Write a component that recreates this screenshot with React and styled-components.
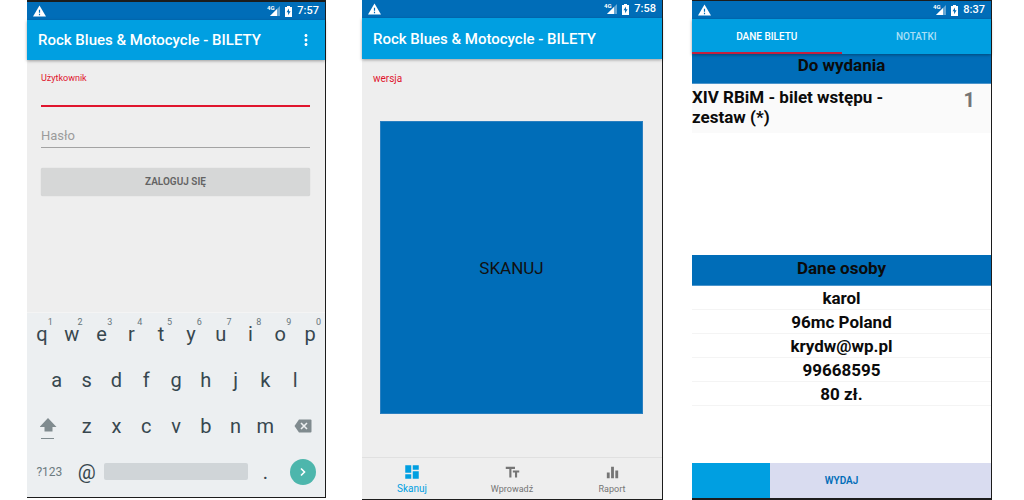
import React from "react";
import styled, { createGlobalStyle } from "styled-components";
import { MdDashboard, MdEqualizer, MdMoreVert, MdTextFields } from "react-icons/md";

const color = {
  dark: "#006db8",
  primary: "#009fe1",
  accent: "#e0142d",
  surface: "#eeeeee",
  frame: "#1c1c1c",
  key: "#37474f",
  muted: "#757575",
};

const GlobalStyle = createGlobalStyle`
  * { box-sizing: border-box; }
  body { margin: 0; background: #fff; font-family: Roboto, "Liberation Sans", sans-serif; }
  button, input { font-family: inherit; }
`;

const Page = styled.main`
  display: grid;
  grid-template-columns: 299fr 36px 301fr 29px 300fr;
  min-height: 100vh;
  padding: 0 32px 0 27px;
`;

const Phone = styled.section`
  grid-column: ${(p) => p.$column};
  display: flex;
  flex-direction: column;
  min-width: 0;
  margin-bottom: ${(p) => p.$below || 0}px;
  background: ${(p) => p.$background || color.surface};
  border: 0 solid ${color.frame};
  border-width: ${(p) => p.$edges};
`;

const StatusBar = styled.div`
  display: flex;
  align-items: center;
  height: 18px;
  padding: 0 6px;
  background: ${color.dark};
  color: #fff;
`;

const StatusIcons = styled.div`
  display: flex;
  align-items: center;
  margin-left: auto;
  gap: 5px;
`;

const Clock = styled.time`
  font-size: 11px;
  line-height: 18px;
  font-weight: 500;
`;

const AppBar = styled.header`
  position: relative;
  display: flex;
  align-items: center;
  justify-content: space-between;
  height: ${(p) => p.$height || 40}px;
  padding: 0 10px 0 11px;
  background: ${color.primary};
  color: #fff;
  box-shadow: 0 1px 3px rgba(0, 0, 0, 0.35);
`;

const Title = styled.h1`
  margin: 0;
  font-size: 15px;
  line-height: 20px;
  font-weight: 500;
  white-space: nowrap;
`;

const IconButton = styled.button`
  display: flex;
  padding: 0;
  border: 0;
  background: none;
  color: inherit;
`;

const LoginForm = styled.form`
  flex: 1;
  display: flex;
  flex-direction: column;
  padding: 12px 15px 0 14px;
`;

const FieldLabel = styled.label`
  font-size: 9px;
  line-height: 12px;
  color: ${color.accent};
`;

const TextInput = styled.input`
  width: 100%;
  height: ${(p) => (p.$active ? 23 : 25)}px;
  margin-bottom: ${(p) => (p.$active ? 16 : 20)}px;
  padding: 0;
  border: 0;
  border-bottom: ${(p) => (p.$active ? `2px solid ${color.accent}` : "1px solid #a3a3a3")};
  border-radius: 0;
  outline: 0;
  background: none;
  font-size: 13px;
  line-height: 20px;
  &::placeholder { color: #9b9b9b; }
`;

const LoginButton = styled.button`
  height: 28px;
  border: 0;
  border-radius: 2px;
  background: #d6d7d7;
  box-shadow: 0 0 1px rgba(0, 0, 0, 0.2);
  color: #636363;
  font-size: 10px;
  line-height: 16px;
  font-weight: 600;
`;

const Keyboard = styled.div`
  border-top: 1px solid #f4f4f4;
  background: #eceff1;
`;

const KeyRow = styled.div`
  display: flex;
  justify-content: center;
  height: 46px;
  padding-bottom: 5px;
`;

const Key = styled.button`
  position: relative;
  display: flex;
  flex: 0 0 ${(p) => (p.$wide ? 15 : 10)}%;
  align-items: center;
  justify-content: center;
  min-width: 0;
  padding: 0;
  border: 0;
  background: none;
  color: ${(p) => (p.$soft ? "#6d7b81" : color.key)};
  font-size: ${(p) => (p.$soft ? 12 : 20)}px;
  line-height: 24px;
`;

const KeyHint = styled.span`
  position: absolute;
  top: 4px;
  right: 4px;
  color: #66757c;
  font-size: 9px;
  line-height: 10px;
`;

const SpaceKey = styled.button`
  flex: 0 0 48%;
  align-self: center;
  height: 17px;
  margin: 0 1%;
  padding: 0;
  border: 0;
  border-radius: 2px;
  background: #d0d5d8;
`;

const EnterDisc = styled.span`
  display: flex;
  align-items: center;
  justify-content: center;
  width: 26px;
  height: 26px;
  border-radius: 50%;
  background: #4db6ac;
`;

const ScanBody = styled.div`
  flex: 1;
  display: flex;
  flex-direction: column;
  padding: 12px 19px 43px 18px;
`;

const Version = styled.p`
  margin: 0 -7px 34px;
  color: ${color.accent};
  font-size: 10px;
  line-height: 16px;
`;

const ScanButton = styled.button`
  flex: 1;
  min-height: 200px;
  border: 1px solid #2a7fc0;
  background: ${color.dark};
  color: #111;
  font-size: 17px;
  line-height: 24px;
`;

const BottomNav = styled.nav`
  display: flex;
  height: 42px;
  border-top: 1px solid #e0e0e0;
`;

const NavLink = styled.a`
  flex: 1;
  display: flex;
  flex-direction: column;
  align-items: center;
  padding-top: ${(p) => (p.$active ? 5 : 6)}px;
  color: ${(p) => (p.$active ? color.primary : color.muted)};
  font-size: ${(p) => (p.$active ? 10 : 9)}px;
  line-height: 16px;
  text-decoration: none;
`;

const Tabs = styled.div`
  position: relative;
  display: flex;
  height: 35px;
  background: ${color.primary};
  box-shadow: 0 1px 3px rgba(0, 0, 0, 0.35);
`;

const Tab = styled.button`
  flex: 1;
  padding: 2px 0 0;
  border: 0;
  border-bottom: 2px solid ${(p) => (p.$active ? "#c3203f" : "transparent")};
  background: none;
  color: ${(p) => (p.$active ? "#fff" : "#a9dff6")};
  font-size: 10px;
  line-height: 16px;
  font-weight: 500;
`;

const SectionTitle = styled.h2`
  height: ${(p) => p.$height}px;
  margin: 0;
  border-bottom: 1px solid #4a94cb;
  background: ${color.dark};
  color: #0b0b0b;
  font-size: 17px;
  line-height: ${(p) => p.$line}px;
  font-weight: 700;
  text-align: center;
`;

const TicketArea = styled.div`
  flex: 1;
`;

const TicketRow = styled.div`
  display: flex;
  justify-content: space-between;
  min-height: 49px;
  padding: 3px 16px 0 0;
  background: #fafafa;
`;

const TicketName = styled.p`
  width: 70%;
  margin: 0;
  color: #0b0b0b;
  font-size: 17px;
  line-height: 20px;
  font-weight: 700;
`;

const TicketCount = styled.span`
  color: ${color.muted};
  font-size: 20px;
  line-height: 26px;
  font-weight: 700;
`;

const PersonList = styled.ul`
  margin: 0 0 57px;
  padding: 0;
  list-style: none;
`;

const PersonItem = styled.li`
  height: 24px;
  border-bottom: 1px solid #f4f4f4;
  color: #0b0b0b;
  font-size: 17px;
  line-height: 24px;
  font-weight: 700;
  text-align: center;
`;

const IssueButton = styled.button`
  height: 35px;
  padding: 0;
  border: 0;
  background: linear-gradient(to right, ${color.primary} 26%, #d9dcf0 26%);
  color: ${color.dark};
  font-size: 10px;
  line-height: 16px;
  font-weight: 600;
`;

function WarningIcon() {
  return (
    <svg width="13" height="12" viewBox="0 0 22 20" aria-hidden="true">
      <path d="M0 19.5h22L11 .5z" fill="#fff" />
      <path d="M10 8h2v5h-2zM10 14.8h2v2.2h-2z" fill={color.dark} />
    </svg>
  );
}

function SignalIcon() {
  return (
    <svg width="13" height="12" viewBox="0 0 13 12" aria-hidden="true">
      <path d="M13 1v10H3z" fill="#fff" opacity=".4" />
      <path d="M10 4v7H3z" fill="#fff" />
      <text x="0" y="5" fill="#fff" fontSize="6" fontWeight="700">4G</text>
    </svg>
  );
}

function BatteryIcon() {
  return (
    <svg width="7" height="11" viewBox="0 0 7 11" aria-hidden="true">
      <path d="M2 0h3v1h2v10H0V1h2z" fill="#fff" />
      <path d="M4 2.4 1.5 6.2h1.6V9.2L5.6 5.2H4z" fill={color.dark} />
    </svg>
  );
}

function ShiftIcon() {
  return (
    <svg width="18" height="26" viewBox="0 0 18 26" fill="#808b8f" aria-hidden="true">
      <path d="M8 5 16.5 14H12.5v4.5h-8V14H-.5z" />
      <path d="M1 25h13v1H1z" />
    </svg>
  );
}

function BackspaceIcon() {
  return (
    <svg width="18" height="14" viewBox="0 0 18 14" aria-hidden="true">
      <path d="M5 .5h11.5q1 0 1 1v11q0 1-1 1H5L.5 7z" fill="#808b8f" />
      <path d="m7 4 6 6m0-6-6 6" stroke="#eceff1" strokeWidth="1.6" />
    </svg>
  );
}

function EnterIcon() {
  return (
    <svg width="8" height="10" viewBox="0 0 8 10" aria-hidden="true">
      <path d="m2 1.5 3.5 3.5L2 8.5" fill="none" stroke="#fff" strokeWidth="1.6" />
    </svg>
  );
}

function Status({ time }) {
  return (
    <StatusBar>
      <WarningIcon />
      <StatusIcons>
        <SignalIcon />
        <BatteryIcon />
        <Clock>{time}</Clock>
      </StatusIcons>
    </StatusBar>
  );
}

const stop = (event) => event.preventDefault();

function LoginScreen() {
  return (
    <Phone $column={1} $edges="2px 1px 1px 0" $below={2}>
      <Status time="7:57" />
      <AppBar>
        <Title>Rock Blues &amp; Motocycle - BILETY</Title>
        <IconButton aria-label="Menu"><MdMoreVert size={18} /></IconButton>
      </AppBar>
      <LoginForm onSubmit={stop}>
        <FieldLabel htmlFor="user">Użytkownik</FieldLabel>
        <TextInput id="user" type="text" $active />
        <TextInput type="password" placeholder="Hasło" aria-label="Hasło" />
        <LoginButton type="submit">ZALOGUJ SIĘ</LoginButton>
      </LoginForm>
      <Keyboard>
        <KeyRow>
          {[..."qwertyuiop"].map((letter, i) => (
            <Key key={letter}>{letter}<KeyHint>{(i + 1) % 10}</KeyHint></Key>
          ))}
        </KeyRow>
        <KeyRow>
          {[..."asdfghjkl"].map((letter) => <Key key={letter}>{letter}</Key>)}
        </KeyRow>
        <KeyRow>
          <Key $wide aria-label="Shift"><ShiftIcon /></Key>
          {[..."zxcvbnm"].map((letter) => <Key key={letter}>{letter}</Key>)}
          <Key $wide aria-label="Backspace"><BackspaceIcon /></Key>
        </KeyRow>
        <KeyRow>
          <Key $wide $soft>?123</Key>
          <Key>@</Key>
          <SpaceKey aria-label="Space" />
          <Key>.</Key>
          <Key $wide aria-label="Enter"><EnterDisc><EnterIcon /></EnterDisc></Key>
        </KeyRow>
      </Keyboard>
    </Phone>
  );
}

function ScanScreen() {
  return (
    <Phone $column={3} $edges="0 1px 1px 0">
      <Status time="7:58" />
      <AppBar $height={41}>
        <Title>Rock Blues &amp; Motocycle - BILETY</Title>
      </AppBar>
      <ScanBody>
        <Version>wersja</Version>
        <ScanButton>SKANUJ</ScanButton>
      </ScanBody>
      <BottomNav>
        <NavLink href="#skanuj" $active><MdDashboard size={18} />Skanuj</NavLink>
        <NavLink href="#wprowadz"><MdTextFields size={17} />Wprowadź</NavLink>
        <NavLink href="#raport"><MdEqualizer size={17} />Raport</NavLink>
      </BottomNav>
    </Phone>
  );
}

const person = ["karol", "96mc Poland", "krydw@wp.pl", "99668595", "80 zł."];

function TicketScreen() {
  return (
    <Phone $column={5} $edges="1px 1px 2px 0" $background="#fff">
      <Status time="8:37" />
      <Tabs>
        <Tab $active>DANE BILETU</Tab>
        <Tab>NOTATKI</Tab>
      </Tabs>
      <SectionTitle $height={30} $line={22}>Do wydania</SectionTitle>
      <TicketArea>
        <TicketRow>
          <TicketName>XIV RBiM - bilet wstępu - zestaw (*)</TicketName>
          <TicketCount>1</TicketCount>
        </TicketRow>
      </TicketArea>
      <SectionTitle $height={31} $line={26}>Dane osoby</SectionTitle>
      <PersonList>
        {person.map((line) => <PersonItem key={line}>{line}</PersonItem>)}
      </PersonList>
      <IssueButton>WYDAJ</IssueButton>
    </Phone>
  );
}

export default function App() {
  return (
    <>
      <GlobalStyle />
      <Page>
        <LoginScreen />
        <ScanScreen />
        <TicketScreen />
      </Page>
    </>
  );
}
